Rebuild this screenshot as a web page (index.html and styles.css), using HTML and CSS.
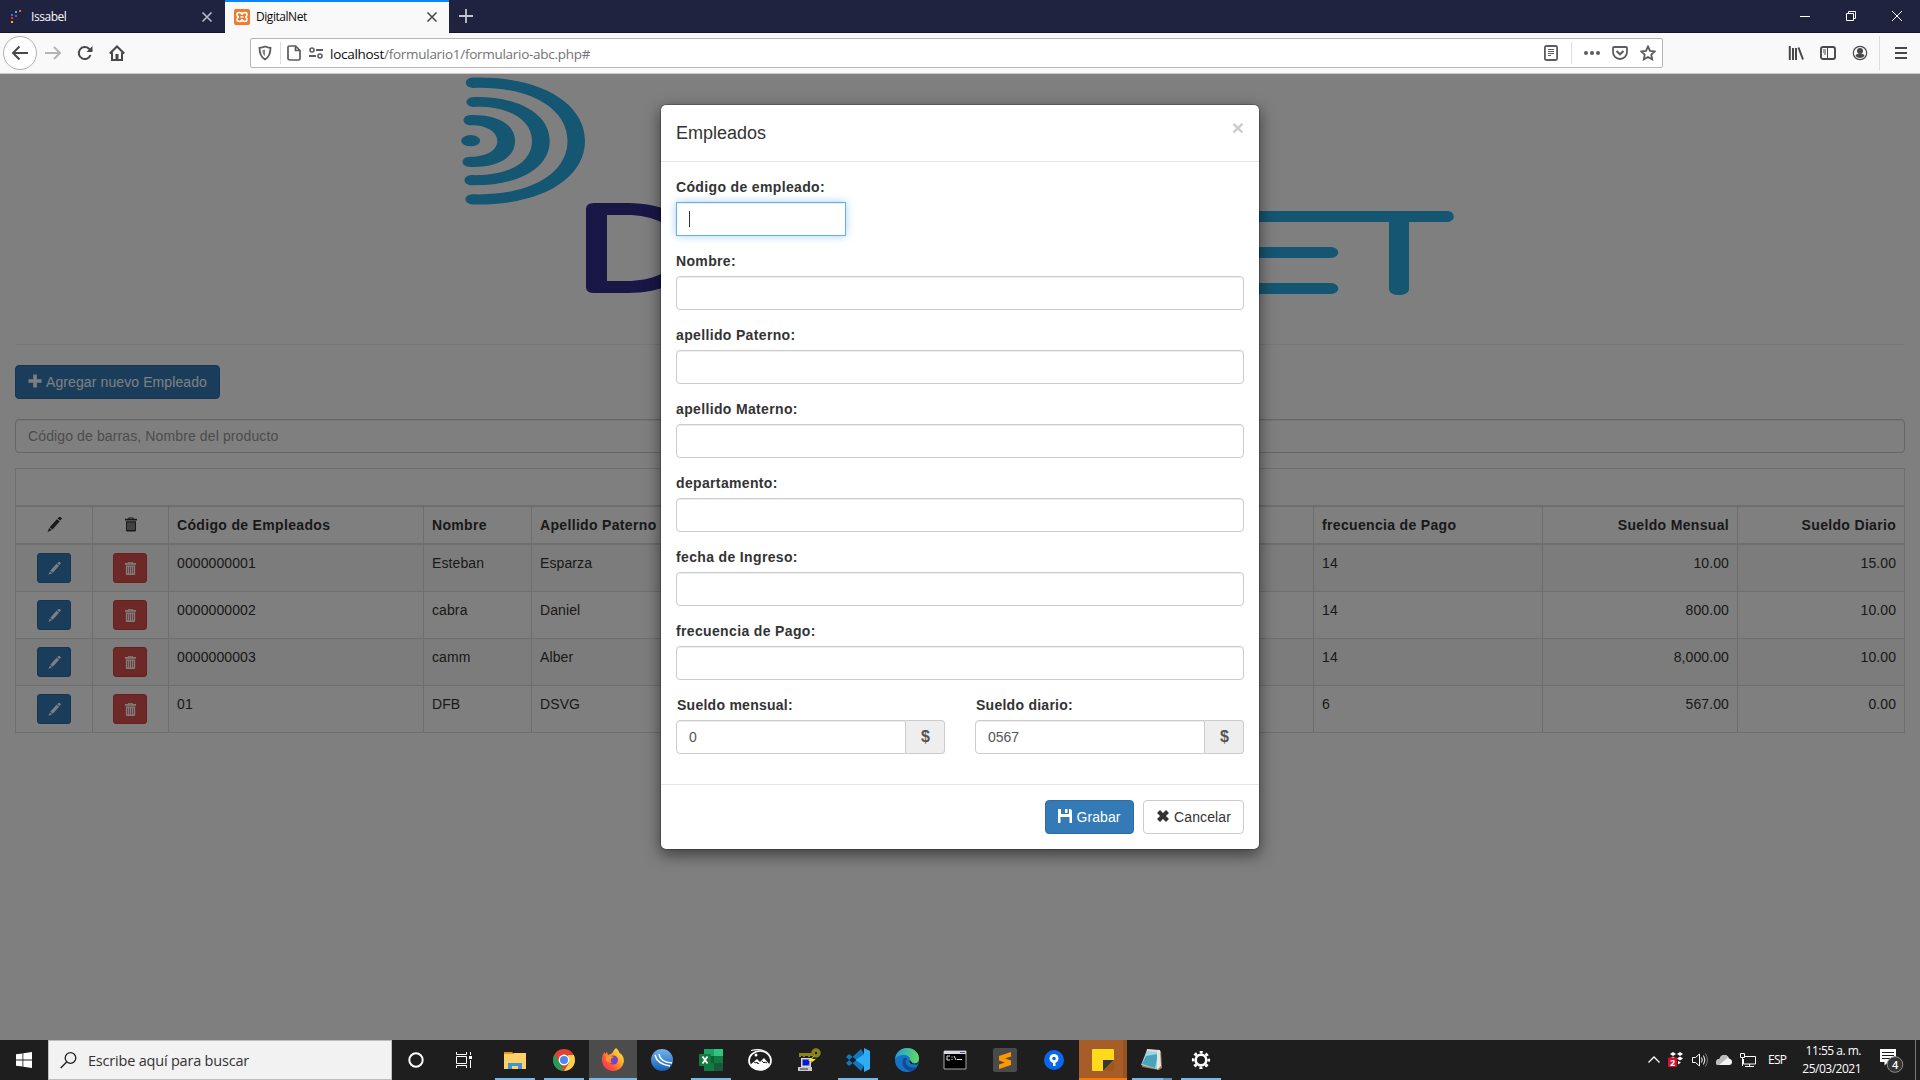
FILE: index.html
```html
<!DOCTYPE html>
<html lang="es">
<head>
<meta charset="utf-8">
<title>DigitalNet</title>
<link rel="stylesheet" href="styles.css">
</head>
<body>
<svg width="0" height="0" class="defs">
  <symbol id="pencil" viewBox="0 0 14 14"><path d="M9.800 1.300l2.600 2 1.200-1.500c.3-.4.2-.8-.1-1.100L12.400 0c-.4-.3-.8-.2-1.100.1zM9.200 2L2.500 9.500l2.700 2.200L11.900 4zM2 10.200L.5 14l3.900-1.800z"/></symbol>
  <symbol id="trash" viewBox="0 0 14 14"><path fill-rule="evenodd" d="M4.500 0h5v1.200H13V3H1V1.200h3.500zM5.700 .9v.5h2.600V.9zM2 3.800h10v9a1.200 1.200 0 0 1-1.200 1.200H3.200A1.200 1.200 0 0 1 2 12.800zM3.600 5v7.500h.8V5zm2 0v7.500h.8V5zm2 0v7.500h.8V5zm2 0v7.500h.8V5z"/></symbol>
  <symbol id="close" viewBox="0 0 12 12"><path d="M1.500 1.500l9 9m0-9l-9 9" fill="none" stroke="currentColor" stroke-width="1.600"/></symbol>
</svg>

<header class="tabs">
  <div class="tab">
    <svg class="fav" width="16" height="16"><path d="M5 2h2v2H5z" fill="#3fc0b8"/><path d="M9 1h2v2H9z" fill="#e5643c"/><path d="M1 5h2v2H1z" fill="#4d6bd0"/><path d="M5 6h2v2H5z" fill="#8948a8"/><path d="M1 8h2v2H1z" fill="#d34"/><path d="M1 12h2v2H1z" fill="#f5b52b"/></svg>
    <span class="tab-title">Issabel</span>
    <svg class="tab-x" width="12" height="12"><use href="#close"/></svg>
  </div>
  <div class="tab active">
    <svg class="fav" width="16" height="16"><rect width="16" height="16" rx="2" fill="#ee7a2c"/><path d="M5.200 3.500Q8 3.500 8 6q0-2.500 2.800-2.500t2 3Q12.500 8 11 8q1.500 0 1.800 1.500.6 3-2 3T8 10q0 2.500-2.800 2.500t-2-3Q3.500 8 5 8 3.500 8 3.200 6.500q-.8-3 2-3zM6.500 8h3" fill="none" stroke="#fff" stroke-width="1.700"/></svg>
    <span class="tab-title">DigitalNet</span>
    <svg class="tab-x" width="12" height="12"><use href="#close"/></svg>
  </div>
  <svg class="plus" width="14" height="14" viewBox="0 0 14 14"><path d="M7 0v14M0 7h14" stroke="#c4c4cf" stroke-width="1.800"/></svg>
  <div class="win">
    <svg width="12" height="12"><path d="M1 6.500h10" stroke="#fff"/></svg>
    <svg width="12" height="12"><path d="M1.500 3.500h7v7h-7zM3.500 3.500v-2h7v7h-2" fill="none" stroke="#fff"/></svg>
    <svg width="12" height="12"><path d="M1 1l10 10M11 1L1 11" stroke="#fff"/></svg>
  </div>
</header>

<nav class="toolbar">
  <svg class="back" width="36" height="36" viewBox="0 0 36 36"><circle cx="18" cy="18" r="16.500" fill="#fff" stroke="#b1b1b3"/><path d="M26 18H11.500M17.500 11.500L11 18l6.500 6.500" fill="none" stroke="#484848" stroke-width="2"/></svg>
  <svg class="fwd" width="16" height="16" viewBox="0 0 16 16"><path d="M0 8h14.500M9 2l6 6-6 6" fill="none" stroke="#b4b4b6" stroke-width="2"/></svg>
  <svg class="reload" width="16" height="16" viewBox="0 0 16 16"><path d="M13.500 10A6 6 0 1 1 12 3.700L14 6" fill="none" stroke="#484848" stroke-width="2"/><path d="M15.500 1v6H9.500z" fill="#484848"/></svg>
  <svg class="home" width="16" height="16" viewBox="0 0 16 16"><path d="M.8 8.500L8 1.500l7.200 7M3 7.500v7.500h10V7.500" fill="none" stroke="#484848" stroke-width="2"/><path d="M6.500 9h3v5.500h-3z" fill="#484848"/></svg>
  <div class="urlbar">
    <svg class="shield" width="14" height="16" viewBox="0 0 14 16"><path d="M7 1.500c2 .9 3.600 1.200 5.500 1.300 0 5.800-1 9.200-5.500 11.700C2.500 12 1.500 8.600 1.500 2.800 3.400 2.700 5 2.400 7 1.500z" fill="none" stroke="#5c5c5f" stroke-width="1.800"/><path d="M7 4.500v6.800C5.300 10 4.500 8 4.400 5.200z" fill="#5c5c5f" opacity=".75"/></svg>
    <i class="sep"></i>
    <svg class="doc" width="14" height="16" viewBox="0 0 14 16"><path d="M3 1h5.500L13 5.500V13.500q0 1.500-1.500 1.500h-8Q1 15 1 13.500V2.500Q1 1 3 1zM8.500 1v4.500H13" fill="none" stroke="#5c5c5f" stroke-width="1.700"/></svg>
    <svg class="perm" width="14" height="12" viewBox="0 0 14 12"><path d="M7 3h7M0 9h7" stroke="#5c5c5f" stroke-width="1.800"/><circle cx="3" cy="3" r="2" fill="none" stroke="#5c5c5f" stroke-width="1.600"/><circle cx="11" cy="9" r="2" fill="none" stroke="#5c5c5f" stroke-width="1.600"/></svg>
    <span class="url"><b>localhost</b>/formulario1/formulario-abc.php#</span>
    <div class="url-tools">
      <svg width="16" height="16" viewBox="0 0 16 16"><rect x="1.900" y="1" width="12.200" height="14" rx="1.500" fill="none" stroke="#5c5c5f" stroke-width="1.800"/><path d="M5 4.500h6M5 6.500h6M5 8.500h6M5 10.500h3" stroke="#5c5c5f"/></svg>
      <i class="sep"></i>
      <svg class="dots" width="16" height="16" viewBox="0 0 16 16"><g fill="#5c5c5f"><circle cx="2" cy="8" r="2"/><circle cx="8" cy="8" r="2"/><circle cx="14" cy="8" r="2"/></g></svg>
      <svg width="16" height="16" viewBox="0 0 16 16"><path d="M2 2h12q1 0 1 1v4a7 7 0 0 1-14 0V3q0-1 1-1z" fill="none" stroke="#5c5c5f" stroke-width="1.800"/><path d="M4.500 6L8 9.300 11.500 6" fill="none" stroke="#5c5c5f" stroke-width="2"/></svg>
      <svg width="16" height="16" viewBox="0 0 16 16"><path d="M8 1.500l2 4.300 4.800.6-3.500 3.200.9 4.800L8 12l-4.200 2.400.9-4.800L1.200 6.400 6 5.800z" fill="none" stroke="#5c5c5f" stroke-width="1.800"/></svg>
    </div>
  </div>
  <div class="right-tools">
    <svg width="16" height="16" viewBox="0 0 16 16"><path d="M1.800 1v14M5 3v12M8 3v12M10.500 2.500L15 14.500" stroke="#484848" stroke-width="2"/></svg>
    <svg width="16" height="16" viewBox="0 0 16 16"><rect x="1" y="2" width="14" height="12" rx="2" fill="none" stroke="#484848" stroke-width="1.900"/><path d="M7.500 2v12" stroke="#484848"/><path d="M3 5h3M3 7h3M4 9h2" stroke="#484848"/></svg>
    <svg width="16" height="16" viewBox="0 0 16 16"><circle cx="8" cy="8" r="6.700" fill="none" stroke="#484848" stroke-width="1.200"/><circle cx="8" cy="6" r="3" fill="#484848"/><path d="M3.500 11q.3-2 2-2h5q1.700 0 2 2a6 6 0 0 1-9 0z" fill="#484848"/></svg>
    <i class="sep2"></i>
    <svg class="burger" width="12" height="14"><path d="M0 2h12M0 7h12M0 12h12" stroke="#484848" stroke-width="2"/></svg>
  </div>
</nav>

<main class="page">
  <section class="banner">
    <svg class="logo" width="1060" height="270" viewBox="440 74 1060 270">
      <g fill="#2aace4">
        <path d="M473 77.500C540 76 585 103 585 141S540 206 473 204.500C463 204 463 194.500 473 194.300 529 196 567.500 174 567.500 141S529 86 473 87.900C463.500 87.500 463.500 78 473 77.500z"/>
        <path d="M474 97C517 96 549.700 113 549.700 141S517 186 472 185.200C462 185 462 175.300 472 175.100 508 176 532 163 532 141S508 106 474 106.900C464 106.500 464 97.500 474 97z"/>
        <path d="M471 115C497 114.500 515 124 515 141S497 168 470 167C460 166.500 460 157 470 156.700 485 157 497.300 151 497.300 141S485 125 471 125.300C461 125 461 115.500 471 115z"/>
        <ellipse cx="470.700" cy="140.700" rx="9.500" ry="5.600"/>
        <path d="M1200 211h247c9 0 9 11 0 11h-38v67c0 8-20 8-20 0v-67h-189zM1200 247h130c11 0 11 11 0 11h-130zM1200 283h130c11 0 11 11 0 11h-130z"/>
      </g>
      <path fill="#302e8c" fill-rule="evenodd" d="M594 203h34C662 203 700 217 700 248S662 293 628 293h-34q-8 0-8-6v-78q0-6 8-6zM607 215v66h20C652 281 680 271 680 248S652 215 627 215z"/>
    </svg>
  </section>
  <div class="actions"><button class="btn primary add"><svg width="14" height="14"><path d="M7 .5v13M.5 7h13" stroke="#fff" stroke-width="3.600"/></svg> Agregar nuevo Empleado</button></div>
  <div class="search">Código de barras, Nombre del producto</div>
  <table class="grid">
    <colgroup><col class="c1"><col class="c2"><col class="c3"><col class="c4"><col class="c5"><col class="c6"><col class="c7"><col class="c8"><col class="c9"></colgroup>
    <thead>
      <tr><th colspan="9"></th></tr>
      <tr><th class="mid"><svg width="15" height="15"><use href="#pencil"/></svg></th><th class="mid"><svg width="14" height="15"><use href="#trash"/></svg></th><th>Código de Empleados</th><th>Nombre</th><th>Apellido Paterno</th><th></th><th>frecuencia de Pago</th><th class="num">Sueldo Mensual</th><th class="num">Sueldo Diario</th></tr>
    </thead>
    <tbody>
      <tr><td class="mid"><button class="sm blue"><svg width="13" height="13"><use href="#pencil"/></svg></button></td><td class="mid"><button class="sm red"><svg width="13" height="13"><use href="#trash"/></svg></button></td><td>0000000001</td><td>Esteban</td><td>Esparza</td><td></td><td>14</td><td class="num">10.00</td><td class="num">15.00</td></tr>
      <tr><td class="mid"><button class="sm blue"><svg width="13" height="13"><use href="#pencil"/></svg></button></td><td class="mid"><button class="sm red"><svg width="13" height="13"><use href="#trash"/></svg></button></td><td>0000000002</td><td>cabra</td><td>Daniel</td><td></td><td>14</td><td class="num">800.00</td><td class="num">10.00</td></tr>
      <tr><td class="mid"><button class="sm blue"><svg width="13" height="13"><use href="#pencil"/></svg></button></td><td class="mid"><button class="sm red"><svg width="13" height="13"><use href="#trash"/></svg></button></td><td>0000000003</td><td>camm</td><td>Alber</td><td></td><td>14</td><td class="num">8,000.00</td><td class="num">10.00</td></tr>
      <tr><td class="mid"><button class="sm blue"><svg width="13" height="13"><use href="#pencil"/></svg></button></td><td class="mid"><button class="sm red"><svg width="13" height="13"><use href="#trash"/></svg></button></td><td>01</td><td>DFB</td><td>DSVG</td><td></td><td>6</td><td class="num">567.00</td><td class="num">0.00</td></tr>
    </tbody>
  </table>

  <div class="backdrop">
    <div class="modal">
      <div class="modal-head"><h4>Empleados</h4><span class="x">×</span></div>
      <div class="modal-body">
        <div class="field"><label>Código de empleado:</label><div class="input focus"><i class="caret"></i></div></div>
        <div class="field"><label>Nombre:</label><div class="input"></div></div>
        <div class="field"><label>apellido Paterno:</label><div class="input"></div></div>
        <div class="field"><label>apellido Materno:</label><div class="input"></div></div>
        <div class="field"><label>departamento:</label><div class="input"></div></div>
        <div class="field"><label>fecha de Ingreso:</label><div class="input"></div></div>
        <div class="field"><label>frecuencia de Pago:</label><div class="input"></div></div>
        <div class="pair">
          <div class="field"><label>Sueldo mensual:</label><div class="group"><div class="input">0</div><span class="addon">$</span></div></div>
          <div class="field"><label>Sueldo diario:</label><div class="group"><div class="input">0567</div><span class="addon">$</span></div></div>
        </div>
      </div>
      <div class="modal-foot">
        <button class="btn primary save"><svg width="14" height="14"><path fill="#fff" d="M0 0h3v5h8V0h1.500L14 1.500V14h-2.500V8h-9v6H0zM7 0h2.500v4H7z"/></svg> Grabar</button>
        <button class="btn cancel"><svg width="14" height="14"><path d="M2.500 2.500l9 9m0-9l-9 9" stroke="#333" stroke-width="4.200"/></svg> Cancelar</button>
      </div>
    </div>
  </div>
</main>

<footer class="taskbar">
  <div class="start"><svg width="16" height="16"><path fill="#fff" d="M0 2.300l6.500-.9v6.200H0zM7.300 1.300L16 0v7.600H7.300zM0 8.400h6.500v6.200L0 13.700zM7.300 8.400H16V16l-8.700-1.300z"/></svg></div>
  <div class="tsearch"><svg width="17" height="17"><circle cx="10.500" cy="6" r="5.300" fill="none" stroke="#222" stroke-width="1.300"/><path d="M6.700 10L.7 16" stroke="#222" stroke-width="1.400"/></svg><span>Escribe aquí para buscar</span></div>
  <div class="sys">
    <svg width="16" height="16"><circle cx="8" cy="8" r="6.700" fill="none" stroke="#fff" stroke-width="2"/></svg>
    <svg width="16" height="16"><path d="M.5 0v2.500h10V0M.5 16v-2.500h10V16M.5 4.500h10v7H.5zM14.500 0v3M14.500 8v8" fill="none" stroke="#fff"/><path d="M13 4h3v3h-3z" fill="#fff"/></svg>
  </div>
  <div class="apps">
    <div class="app run"><svg width="24" height="24"><path d="M1 4h8l2 2H1z" fill="#e29a12"/><path d="M1 6h9l1-1h12v16H1z" fill="#fdd165"/><path d="M5 21v-6h14v6h-4v-3H9v3z" fill="#3d96d4"/></svg></div>
    <div class="app run"><svg width="24" height="24"><circle cx="12" cy="12" r="11" fill="#dc4437"/><path d="M2.400 6.700L8 15.500l4 7.500A11 11 0 0 1 2.400 6.700z" fill="#1ea05a"/><path d="M12 23l5-8-1-8h5.800A11 11 0 0 1 12 23z" fill="#fdd04a"/><circle cx="12" cy="12" r="5.400" fill="#fff"/><circle cx="12" cy="12" r="4" fill="#4a88ef"/></svg></div>
    <div class="app firefox"><svg width="24" height="24"><defs><linearGradient id="ff" x1="1" y1="0" x2="0" y2="1"><stop offset="0" stop-color="#fff04a"/><stop offset=".35" stop-color="#ffb32c"/><stop offset=".65" stop-color="#ff5b36"/><stop offset="1" stop-color="#f02466"/></linearGradient></defs><path d="M15 0c2 1.500 3 3.500 3.500 5 2.500 1 5 5 4.300 9A11 11 0 0 1 1 13C.7 9 2 6 3.500 4l.7 2L6 4l1 3q4-1 5-3 .5-2 3-4z" fill="url(#ff)"/><circle cx="12.500" cy="12" r="4.500" fill="#7542c9"/><path d="M5 8.500q4-1 8 .5l-3 2q-1 3 2 4-6 0-7-3z" fill="#ff9228"/></svg></div>
    <div class="app"><svg width="24" height="24"><defs><linearGradient id="bl" x2="0" y2="1"><stop stop-color="#73b4ef"/><stop offset="1" stop-color="#155eb5"/></linearGradient></defs><circle cx="12" cy="12" r="11" fill="url(#bl)"/><path d="M5 7q2 9 15 11M9 6q1 8 13 9" fill="none" stroke="#fff" stroke-width="1.500"/></svg></div>
    <div class="app run"><svg width="24" height="24"><path d="M5 1h19v22H5z" fill="#185c37"/><path d="M5 1h10v7H5z" fill="#21a366"/><path d="M15 1h9v7h-9z" fill="#33c481"/><path d="M15 8h9v7h-9zM5 15h10v8H5z" fill="#107c41"/><path d="M0 6h12v12H0z" fill="#107c41"/><path d="M3.500 8.500l5 7m0-7l-5 7" stroke="#fff" stroke-width="1.800"/></svg></div>
    <div class="app"><svg width="24" height="24"><ellipse cx="12" cy="12.500" rx="11" ry="9.500" fill="none" stroke="#fff" stroke-width="1.700"/><path d="M3 2Q15-1 22 6L18 4Q12 1 3 3z" fill="#fff"/><path d="M2 17l7-6 3 3 4-4 6 7q-3 5-10 5T2 17z" fill="#fff"/><path d="M6 14l2 1 1-1 1 2 1-1M14 13l2 2 1-1 2 1" stroke="#1e1e1e" fill="none"/><circle cx="8" cy="7" r="1.500" fill="#fff"/></svg></div>
    <div class="app"><svg width="24" height="24"><path d="M2 5h14v3h-3v1h-2V8H8v1H6V8H4v1H2z" fill="#8d8316"/><circle cx="19" cy="5" r="3" fill="none" stroke="#8d8316" stroke-width="3.500"/><path d="M4 10h10v9H4z" fill="#d5d5d5"/><path d="M5.500 11.500h7v6h-7z" fill="#0914dc"/><path d="M1 19h14v4H1z" fill="#c9c9c9"/><path d="M3 21h8" stroke="#333"/><path d="M18 7l-7 6h4l-5 5 9-7h-4z" fill="#ffec18"/></svg></div>
    <div class="app run"><svg width="24" height="24"><path d="M15 1L0 15l3 3L18 6zM15 23L0 9l3-3 15 12z" fill="#0f78c0"/><path d="M18 0v6L9.500 12l8.500 6v6l6-3V3z" fill="#2eacf5"/></svg></div>
    <div class="app"><svg width="24" height="24"><defs><linearGradient id="ed"><stop stop-color="#1f9bde"/><stop offset="1" stop-color="#62dc5c"/></linearGradient></defs><circle cx="12" cy="12" r="12" fill="#1672c4"/><path d="M0 11C1 4 6 0 12 0c7 0 12 5 12 10 0 4-3 6-6 6s-4-1-4-2 1-1 1-3q-1-4-6-4-6 0-9 4z" fill="url(#ed)"/><path d="M9 10c-4 5 0 13 8 13q3-1 5-4-5 2-9-1t-1-7q-1-2-3-1z" fill="#104b96"/><path d="M15 12q-2 2 1 4l6 .5 1.500-2.500q-5 4-8.500-2z" fill="#1e1e1e"/></svg></div>
    <div class="app cmd"><svg width="24" height="20"><path d="M1 1h22v18H1z" fill="#000" stroke="#aaa"/><path d="M1 1h22v3H1z" fill="#d8d8df"/><path d="M17 2.500h5" stroke="#4a5fa0"/><path d="M7 6H4v4h3M9 6.500v1M9 9v1M11 6l2 4M14 9.500h5" stroke="#e5e5e5" fill="none"/></svg></div>
    <div class="app"><svg width="24" height="24"><rect width="24" height="24" rx="2" fill="#4a4a4a"/><path d="M18 4v4.500l-6 2 6 2V17L6 21v-4.500l6-2-6-2V8z" fill="#ff9800"/></svg></div>
    <div class="app"><svg width="24" height="24"><circle cx="12" cy="12" r="10" fill="#0b66f0"/><circle cx="12" cy="10.500" r="4.500" fill="#fff"/><path d="M11 14h2.500v4H11z" fill="#fff"/><circle cx="12" cy="10.500" r="1.800" fill="#0b66f0"/></svg></div>
    <div class="app sticky"><svg width="24" height="24"><rect x="1" y="1" width="22" height="22" rx="1" fill="#ffd91c"/><path d="M12 23l11-11v11z" fill="#a1561c"/><path d="M12 23V12h11z" fill="#373737"/></svg></div>
    <div class="app run many"><svg width="24" height="24"><path d="M7 1l14 2 1 17-3 2L2 19z" fill="#a87d45"/><path d="M7 2l13 1-3 18L1 17z" fill="#9ed4dd"/><path d="M6 8l12-2-3 14L2 16z" fill="#4aa3b8"/><path d="M7 1l13 1v2L7 3z" fill="#ddd"/><path d="M17 3l3-1 1 16-4 4z" fill="#dce9eb"/></svg></div>
    <div class="app run"><svg width="24" height="24"><circle cx="12" cy="12" r="5.300" fill="none" stroke="#fff" stroke-width="2.600"/><circle cx="12" cy="12" r="7.800" fill="none" stroke="#fff" stroke-width="2.600" stroke-dasharray="3.060 3.060" stroke-dashoffset="1.530"/></svg></div>
  </div>
  <div class="tray">
    <svg width="14" height="16"><path d="M1.500 10.500L7 5l5.500 5.500" fill="none" stroke="#fff" stroke-width="1.300"/></svg>
    <svg width="18" height="18" viewBox="0 0 18 18"><path d="M6 1l3 2-3 2-3-2zM13 1l3 2-3 2-3-2zM6 5.500l3 2-3 2-3-2zM13 5.500l3 2-3 2-3-2zM11 10l3 1.500-3 2z" fill="#fff"/><rect x="1" y="6.500" width="9" height="9.500" rx="1" fill="#d8102a"/><text x="3" y="14.500" font-size="9" font-weight="700" fill="#fff" font-family="Open Sans, sans-serif">2</text></svg>
    <svg width="18" height="16"><path d="M1.500 5.500h3l4-3.500v12l-4-3.500h-3z" fill="none" stroke="#fff"/><path d="M10.500 5.500q1.500 2.500 0 5M12.500 3.500q2.800 4.500 0 9" fill="none" stroke="#fff"/><path d="M14.500 1.500q3.800 6.500 0 13" fill="none" stroke="#777"/></svg>
    <svg width="18" height="16"><path d="M1 11q0-4 3.500-4 1-4 5-4 3.500 0 4.500 3.500 3 .5 3 3.500t-3 3H4q-3 0-3-2z" fill="#f4f4f4"/><path d="M1 11q0-4 3.500-4 1-4 5-4 2.500 0 3.800 2.300L4 13q-3 0-3-2z" fill="#bbb"/></svg>
    <svg width="18" height="16"><path d="M5 4.500h11.500v7.500H4.500V7M10.500 12v2.500M6 14.500h9" fill="none" stroke="#fff"/><path d="M1.500 1.500h4v4h-4zM3.500 5.500V14" fill="none" stroke="#fff"/></svg>
    <span class="lang">ESP</span>
    <div class="clock"><span>11:55 a. m.</span><span>25/03/2021</span></div>
    <svg class="note" width="26" height="26"><path d="M1 1h16v13h-8l-3.500 3.500V14H1z" fill="#fff"/><path d="M3 4.500h12M3 7.500h12M3 10.500h8" stroke="#1e1e1e"/><circle cx="16" cy="16.500" r="7.800" fill="#333" stroke="#909090"/><text x="13" y="20.500" font-size="11" font-weight="600" fill="#fff" font-family="Open Sans, sans-serif">4</text></svg>
    <i class="edge"></i>
  </div>
</footer>
</body>
</html>
```
FILE: styles.css
```css
* { box-sizing: border-box; }
body { margin: 0; width: 1920px; height: 1080px; overflow: hidden; display: flex; flex-direction: column; font: 14px/20px "Liberation Sans", Arial, sans-serif; color: #333; }
svg { display: block; flex: none; }
.defs { position: absolute; }
i { display: block; flex: none; }

.tabs { height: 33px; flex: none; background: #20233f; display: flex; align-items: center; border-bottom: 1px solid #14152a; font-family: "Open Sans", sans-serif; font-size: 12px; color: #f9f9fa; }
.tab { width: 225px; height: 33px; padding: 2px 12px 0 10px; display: flex; align-items: center; }
.tab.active { width: 224px; background: #f9f9f9; border-top: 2px solid #0a84ff; color: #0c0c0d; padding: 0 11px 0 9px; }
.fav { margin-right: 5px; }
.active .fav { margin-right: 6px; }
.tab-title { flex: 1; letter-spacing: -.45px; }
.tab-x { color: #b9bac6; }
.active .tab-x { color: #4a4a4f; }
.plus { margin-left: 10px; }
.win { margin-left: auto; padding-right: 17px; display: flex; gap: 34px; }

.toolbar { height: 41px; flex: none; background: #f9f9f9; border-bottom: 1px solid #ccc; display: flex; align-items: center; padding: 0 13px 0 2px; }
.fwd { margin-left: 7px; }
.reload { margin-left: 16px; }
.home { margin-left: 16px; }
.urlbar { margin-left: 125px; width: 1413px; height: 30px; border: 1px solid #b5b5b6; background: #fff; border-radius: 2px; display: flex; align-items: center; padding: 0 6px 0 7px; }
.sep { width: 1px; height: 22px; background: #ddd; margin-left: 8px; }
.doc { margin-left: 6px; }
.perm { margin-left: 8px; }
.url { margin-left: 7px; font: 13.500px/20px "Open Sans", sans-serif; color: #737373; letter-spacing: -.28px; padding-top: 1px; }
.url b { font-weight: 400; color: #0c0c0d; }
.url-tools { margin-left: auto; display: flex; align-items: center; gap: 12px; }
.url-tools .sep { margin: 0; }
.right-tools { margin-left: auto; display: flex; align-items: center; gap: 16px; }
.sep2 { width: 1px; height: 34px; background: #ddd; margin-left: -5px; }
.burger { margin-left: -1px; }

.page { height: 966px; flex: none; position: relative; padding: 0 15px; background: #fff; }
.banner { height: 271px; border-bottom: 1px solid #eee; padding-left: 425px; }
.actions { padding-top: 20px; }
.btn { display: inline-flex; align-items: center; justify-content: center; height: 34px; border: 1px solid #2e6da4; border-radius: 4px; font: 14px/20px "Liberation Sans", Arial, sans-serif; letter-spacing: .1px; padding: 0; gap: 4px; white-space: nowrap; }
.primary { background: #337ab7; color: #fff; }
.add { width: 205px; }
.save { width: 89px; }
.cancel { width: 101px; background: #fff; color: #333; border-color: #ccc; }
.btn svg { margin-top: -2px; }
.actions .btn { display: flex; }
.search { margin-top: 20px; height: 34px; border: 1px solid #ccc; border-radius: 4px; padding: 6px 12px; color: #999; letter-spacing: .12px; box-shadow: inset 0 1px 1px rgba(0,0,0,.075); }
.grid { margin-top: 15px; width: 1890px; table-layout: fixed; border-collapse: separate; border-spacing: 0; border: solid #ddd; border-width: 1px 0 0 1px; }
.c1 { width: 77px; } .c2 { width: 76px; } .c3 { width: 255px; } .c4 { width: 108px; } .c5 { width: 133px; } .c6 { width: 649px; } .c7 { width: 229px; } .c8 { width: 195px; } .c9 { width: 167px; }
.grid th, .grid td { padding: 8px 8px 0; border: solid #ddd; border-width: 0 1px 1px 0; text-align: left; vertical-align: top; white-space: nowrap; letter-spacing: .1px; }
.grid th { height: 38px; border-bottom-width: 2px; letter-spacing: .33px; }
.grid td { height: 47px; }
.grid tbody tr:nth-child(odd) { background: #f9f9f9; }
.grid .num { text-align: right; }
.grid .mid svg { margin: 2px auto 0; fill: #333; }
.sm { display: block; margin: 0 auto; width: 34px; height: 30px; border-radius: 3px; border: 1px solid #2e6da4; background: #337ab7; padding: 0; }
.sm.red { background: #d9534f; border-color: #d43f3a; margin-left: 12px; }
.grid .mid .sm svg { fill: #fff; margin: 0 auto; }

.backdrop { position: absolute; inset: 0; background: rgba(0,0,0,.5); padding-top: 30px; }
.modal { width: 600px; margin: 0 auto; background: #fff; background-clip: padding-box; border: 1px solid rgba(0,0,0,.2); border-radius: 6px; box-shadow: 0 5px 15px rgba(0,0,0,.5); }
.modal-head { height: 57px; border-bottom: 1px solid #e5e5e5; padding: 15px; display: flex; justify-content: space-between; }
.modal-head h4 { margin: 0; font-size: 18px; line-height: 26px; font-weight: 400; }
.x { font-size: 21px; line-height: 16px; font-weight: 700; color: #ccc; }
.modal-body { padding: 15px; }
.field { margin-bottom: 15px; }
.field label { display: block; font-weight: 700; letter-spacing: .35px; margin-bottom: 5px; }
.input { height: 34px; border: 1px solid #ccc; border-radius: 4px; padding: 6px 12px; color: #555; box-shadow: inset 0 1px 1px rgba(0,0,0,.075); }
.focus { width: 170px; border-color: #66afe9; border-radius: 0; box-shadow: inset 0 1px 1px rgba(0,0,0,.075), 0 0 8px rgba(102,175,233,.6); }
.caret { width: 1px; height: 16px; margin-top: 2px; background: #333; }
.pair { display: grid; grid-template-columns: 1fr 1fr; gap: 30px; }
.pair label { padding-left: 1px; letter-spacing: .26px; }
.group { display: flex; }
.group .input { flex: 1; border-radius: 4px 0 0 4px; }
.addon { width: 39px; border: 1px solid #ccc; border-left: 0; border-radius: 0 4px 4px 0; background: #eee; color: #555; font-size: 16px; line-height: 31px; font-weight: 700; text-align: center; padding-left: 1px; }
.modal-foot { border-top: 1px solid #e5e5e5; padding: 15px; display: flex; justify-content: flex-end; gap: 9px; }

.taskbar { height: 40px; flex: none; background: #1e1e1e; display: flex; color: #fff; font-family: "Open Sans", sans-serif; }
.start { width: 48px; display: flex; align-items: center; justify-content: center; }
.tsearch { width: 344px; background: #f2f2f2; border: 1px solid #bdbdbd; display: flex; align-items: center; padding-left: 11px; gap: 11px; color: #333; font-size: 14.500px; letter-spacing: -.2px; }
.tsearch span { padding-top: 1px; }
.sys { display: flex; align-items: center; gap: 32px; padding: 0 19px 0 16px; }
.apps { display: flex; gap: 1px; }
.app { width: 48px; height: 40px; display: flex; align-items: center; justify-content: center; background: linear-gradient(#76b9ed, #76b9ed) no-repeat center bottom / 0 2px; }
.app.run { background-size: 40px 2px; }
.app.cmd { padding-right: 2px; }
.app.firefox { background-size: 48px 2px; background-color: #4c4c4c; }
.app.sticky { background: #a65d27; border-bottom: 2px solid #ff7600; padding-top: 2px; box-shadow: inset -4px 0 #965423; }
.app.many { background-image: linear-gradient(90deg, #76b9ed 78%, #5d8fbc 78%); }
.tray { margin-left: auto; display: flex; align-items: center; }
.tray > svg { margin-right: 6px; }
.lang { width: 20px; margin-left: 5px; font-size: 12px; letter-spacing: -.7px; }
.clock { width: 60px; margin-left: 13px; display: flex; flex-direction: column; align-items: flex-end; font-size: 12px; line-height: 18px; letter-spacing: -.5px; white-space: nowrap; }
.tray > .note { margin: 1px 0 0 18px; }
.edge { width: 1px; height: 40px; background: #777; margin: 0 4px 0 10px; }
```
